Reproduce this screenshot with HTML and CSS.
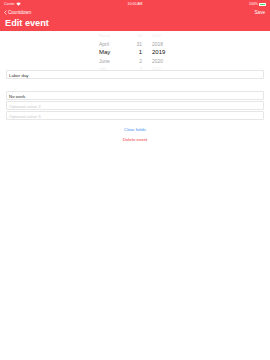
FILE: index.html
```html
<!DOCTYPE html>
<html>
<head>
<meta charset="utf-8">
<link rel="stylesheet" href="styles.css">
</head>
<body>
<div class="header">
  <div class="status">
    <span class="carrier">Carrier <svg class="wifi" viewBox="0 0 10 8" width="5" height="4"><path d="M5 7.5L0.5 3a6.5 6.5 0 0 1 9 0z" fill="#fff"/></svg></span>
    <span class="time">10:00 AM</span>
    <span class="batt">100% <span class="battery"><span class="fill"></span></span></span>
  </div>
  <div class="nav">
    <span class="back"><svg viewBox="0 0 6 10" width="3" height="5"><path d="M5 1L1 5l4 4" stroke="#fff" stroke-width="1.4" fill="none"/></svg>Countdown</span>
    <span class="save">Save</span>
  </div>
  <h1 class="title">Edit event</h1>
</div>
<div class="picker">
  <div class="col month">
    <div class="r far">March</div>
    <div class="r">April</div>
    <div class="r sel">May</div>
    <div class="r">June</div>
    <div class="r far">July</div>
  </div>
  <div class="col day">
    <div class="r far">30</div>
    <div class="r">31</div>
    <div class="r sel">1</div>
    <div class="r">2</div>
    <div class="r far">3</div>
  </div>
  <div class="col year">
    <div class="r far">2017</div>
    <div class="r">2018</div>
    <div class="r sel">2019</div>
    <div class="r">2020</div>
    <div class="r far">2021</div>
  </div>
</div>
<div class="form">
  <div class="field first">Labor day</div>
  <div class="group">
    <div class="field">No work</div>
    <div class="field ph">Optional value 2</div>
    <div class="field ph">Optional value 3</div>
  </div>
  <div class="link clear">Clear fields</div>
  <div class="link delete">Delete event</div>
</div>
</body>
</html>
```
FILE: styles.css
```css
html, body { margin: 0; padding: 0; background: #fff; }
body { width: 270px; height: 360px; font-family: "Liberation Sans", Arial, sans-serif; color: #000; }
.header { background: #f8464e; color: #fff; height: 31px; box-sizing: border-box; padding: 0 4px; display: flex; flex-direction: column; }
.status { display: flex; justify-content: space-between; align-items: center; height: 6px; font-size: 3.5px; padding-top: 1px; }
.carrier, .batt { display: flex; align-items: center; gap: 1px; width: 40px; }
.batt { justify-content: flex-end; }
.battery { width: 7px; height: 3px; border: 0.4px solid #fff; border-radius: 0.6px; display: inline-flex; padding: 0.4px; box-sizing: border-box; }
.fill { flex: 1; background: #4cd964; }
.nav { display: flex; justify-content: space-between; align-items: center; height: 9px; font-size: 4.6px; padding-top: 1px; }
.back { display: flex; align-items: center; gap: 1px; }
.save { padding-right: 1px; }
.title { margin: 0; font-size: 9.2px; font-weight: bold; line-height: 12px; padding-left: 1px; }
.picker { display: flex; justify-content: center; gap: 3px; padding-left: 1px; height: 43px; align-items: center; }
.col { display: flex; flex-direction: column; font-size: 5px; color: #a2a2a2; }
.r { height: 8.3px; line-height: 8.3px; }
.r.far { color: #ededed; font-size: 4px; }
.r.sel { color: #111; font-size: 6px; }
.month { width: 30px; text-align: left; }
.day { width: 10px; text-align: right; }
.year { width: 20px; text-align: left; padding-left: 7px; }
.form { padding: 0 6px; display: flex; flex-direction: column; }
.field { height: 9px; line-height: 9px; border: 0.5px solid #e6e6e6; border-radius: 1px; font-size: 4.4px; color: #333; padding-left: 2px; box-sizing: border-box; margin-bottom: 1px; }
.first { margin-top: -4px; }
.group { margin-top: 11px; display: flex; flex-direction: column; }
.field.ph { color: #c8c8c8; }
.link { text-align: center; font-size: 4.4px; }
.clear { color: #3b8ff0; margin-top: 6px; }
.delete { color: #f0343c; margin-top: 5px; }
```
